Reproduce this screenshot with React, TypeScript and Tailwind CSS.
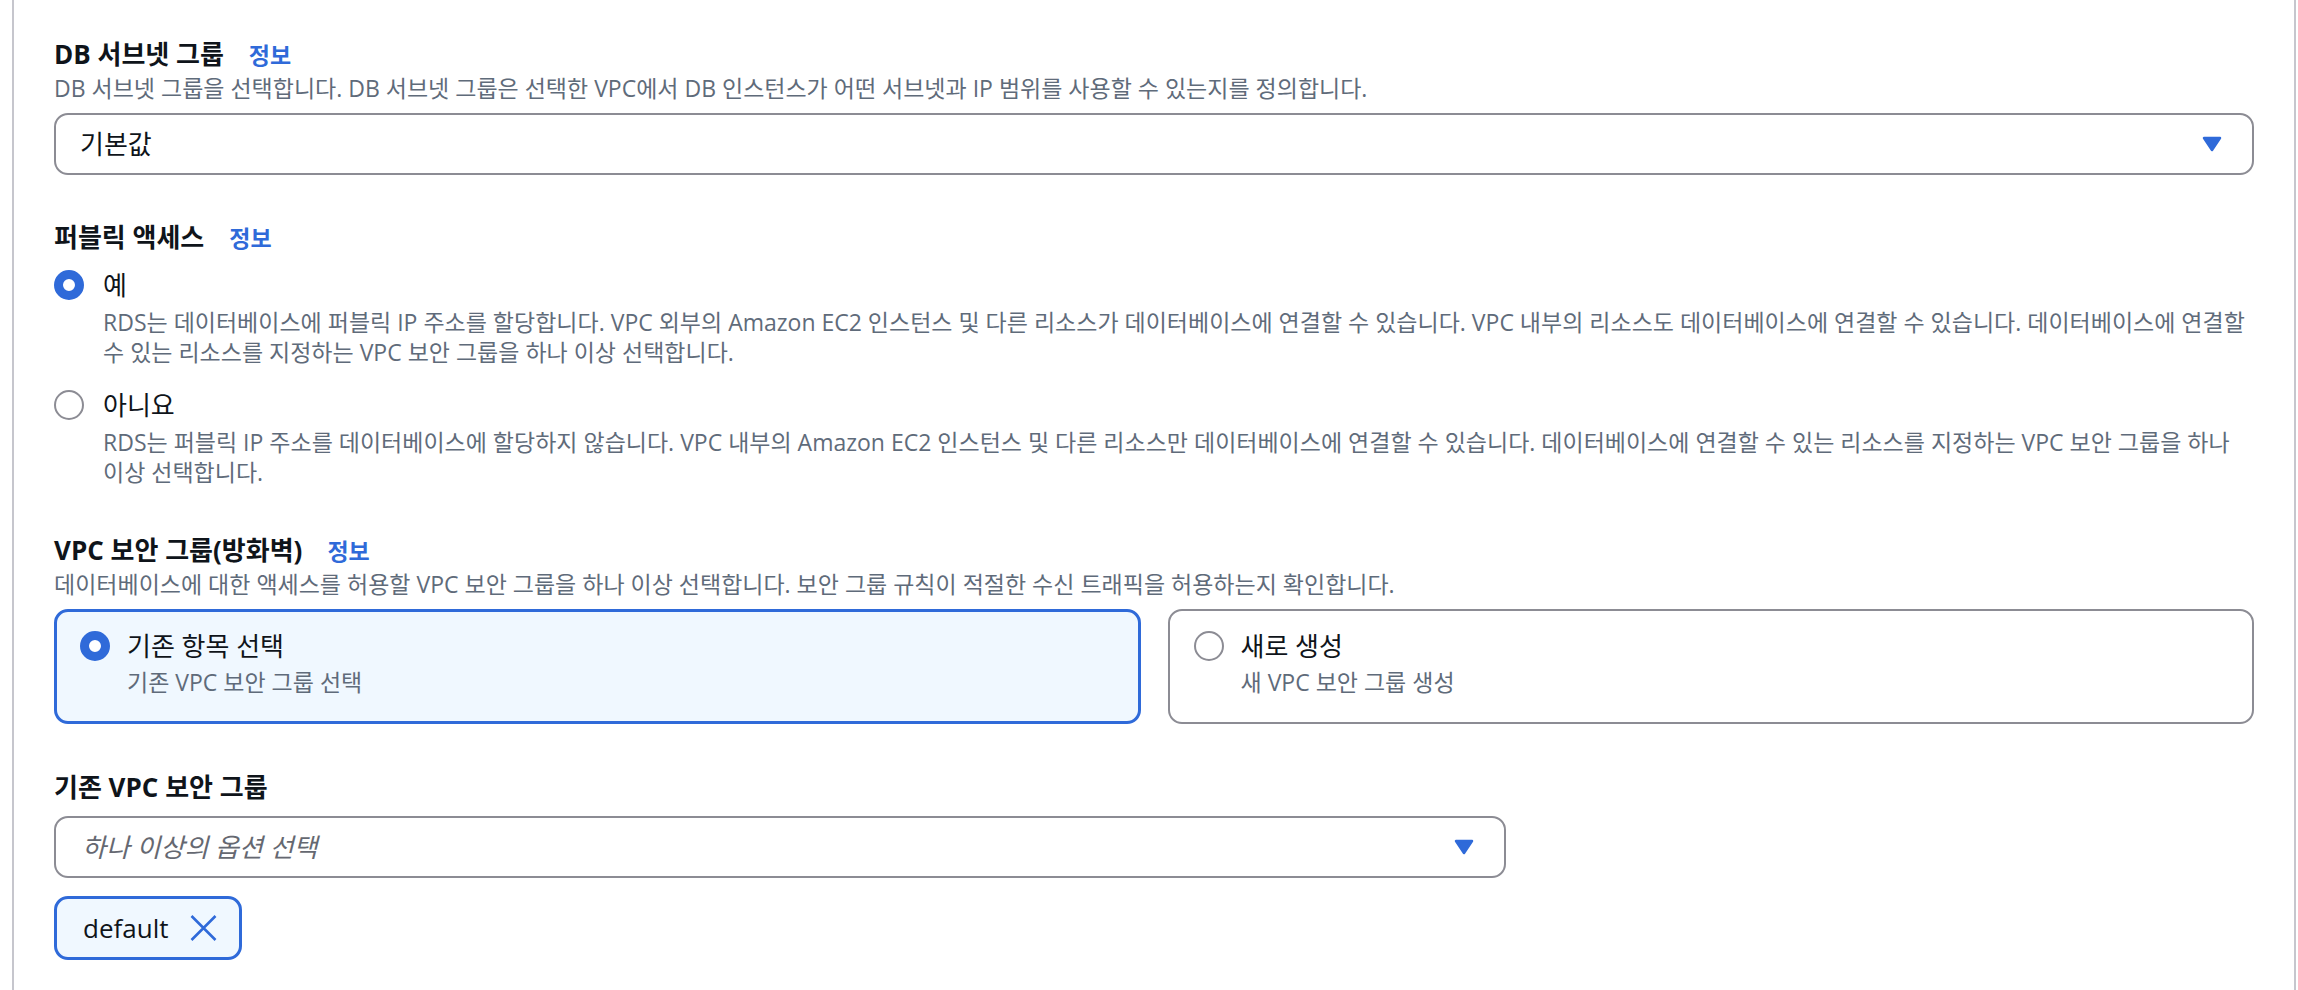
import React from "react"

const BLUE = "#2f6ad9"

function Triangle() {
  return (
    <svg width="20" height="16" viewBox="0 0 20 16">
      <polygon points="2,2 18,2 10,14" fill={BLUE} stroke={BLUE} strokeWidth="2.5" strokeLinejoin="round" />
    </svg>
  )
}

function Radio({ checked }: { checked: boolean }) {
  return checked ? (
    <div className="w-[30px] h-[30px] rounded-full border-[9px] border-[#2f6ad9] bg-white shrink-0" />
  ) : (
    <div className="w-[30px] h-[30px] rounded-full border-2 border-[#8c8c94] bg-white shrink-0" />
  )
}

function FieldLabel({ text, info = true }: { text: string; info?: boolean }) {
  return (
    <div className="flex items-baseline gap-[25px]">
      <span className="text-[26px] font-bold leading-[34px] text-[#0f141a]">{text}</span>
      {info && <a className="text-[23px] font-bold leading-[34px] text-[#2f6ad9]">정보</a>}
    </div>
  )
}

function RadioOption({
  checked,
  label,
  children,
}: {
  checked: boolean
  label: string
  children: React.ReactNode
}) {
  return (
    <div className="flex gap-[19px]">
      <div className="h-[34px] flex items-center">
        <Radio checked={checked} />
      </div>
      <div>
        <div className="text-[26px] leading-[34px] text-[#0f141a]">{label}</div>
        <div className="mt-[5px] text-[23px] leading-[30px] text-[#5f6b7a] break-keep">{children}</div>
      </div>
    </div>
  )
}

export default function App() {
  return (
    <div className="min-h-screen bg-white" style={{ fontFamily: '"Open Sans", "Noto Sans CJK KR", sans-serif' }}>
      <div className="ml-[12px] mr-[2px] min-h-screen border-x-2 border-[#c6c6cd] px-[40px] pt-[37px] pb-[40px]">
        {/* DB subnet group */}
        <div>
          <FieldLabel text="DB 서브넷 그룹" />
          <div className="mt-[1px] text-[23px] leading-[30px] text-[#5f6b7a] break-keep">
            DB 서브넷 그룹을 선택합니다. DB 서브넷 그룹은 선택한 VPC에서 DB 인스턴스가 어떤 서브넷과 IP 범위를 사용할 수 있는지를 정의합니다.
          </div>
          <div className="mt-[10px] h-[62px] rounded-[14px] border-2 border-[#8c8c94] flex items-center justify-between pl-[24px] pr-[30px]">
            <span className="text-[26px] text-[#0f141a]">기본값</span>
            <Triangle />
          </div>
        </div>

        {/* Public access */}
        <div className="mt-[45px]">
          <FieldLabel text="퍼블릭 액세스" />
          <div className="mt-[13px]">
            <RadioOption checked label="예">
              RDS는 데이터베이스에 퍼블릭 IP 주소를 할당합니다. VPC 외부의 Amazon EC2 인스턴스 및 다른 리소스가 데이터베이스에 연결할 수 있습니다. VPC 내부의 리소스도 데이터베이스에 연결할 수 있습니다. 데이터베이스에 연결할 수 있는 리소스를 지정하는 VPC 보안 그룹을 하나 이상 선택합니다.
            </RadioOption>
          </div>
          <div className="mt-[21px]">
            <RadioOption checked={false} label="아니요">
              RDS는 퍼블릭 IP 주소를 데이터베이스에 할당하지 않습니다. VPC 내부의 Amazon EC2 인스턴스 및 다른 리소스만 데이터베이스에 연결할 수 있습니다. 데이터베이스에 연결할 수 있는 리소스를 지정하는 VPC 보안 그룹을 하나 이상 선택합니다.
            </RadioOption>
          </div>
        </div>

        {/* VPC security group */}
        <div className="mt-[46px]">
          <FieldLabel text="VPC 보안 그룹(방화벽)" />
          <div className="mt-[1px] text-[23px] leading-[30px] text-[#5f6b7a] break-keep">
            데이터베이스에 대한 액세스를 허용할 VPC 보안 그룹을 하나 이상 선택합니다. 보안 그룹 규칙이 적절한 수신 트래픽을 허용하는지 확인합니다.
          </div>
          <div className="mt-[10px] grid grid-cols-2 gap-[27px]">
            <div className="rounded-[14px] border-[3px] border-[#2f6ad9] bg-[#f0f8ff] px-[23px] pt-[17px] pb-[24px] flex gap-[17px]">
              <div className="h-[34px] flex items-center">
                <Radio checked />
              </div>
              <div>
                <div className="text-[26px] leading-[34px] text-[#0f141a]">기존 항목 선택</div>
                <div className="mt-[4px] text-[23px] leading-[30px] text-[#5f6b7a]">기존 VPC 보안 그룹 선택</div>
              </div>
            </div>
            <div className="rounded-[14px] border-2 border-[#8c8c94] bg-white px-[24px] pt-[18px] pb-[25px] flex gap-[17px]">
              <div className="h-[34px] flex items-center">
                <Radio checked={false} />
              </div>
              <div>
                <div className="text-[26px] leading-[34px] text-[#0f141a]">새로 생성</div>
                <div className="mt-[4px] text-[23px] leading-[30px] text-[#5f6b7a]">새 VPC 보안 그룹 생성</div>
              </div>
            </div>
          </div>
        </div>

        {/* Existing VPC security groups */}
        <div className="mt-[46px]">
          <FieldLabel text="기존 VPC 보안 그룹" info={false} />
          <div className="mt-[12px] w-[1452px] h-[62px] rounded-[14px] border-2 border-[#8c8c94] flex items-center justify-between pl-[26px] pr-[30px]">
            <span className="text-[26px] italic text-[#656871]">하나 이상의 옵션 선택</span>
            <Triangle />
          </div>
          <div className="mt-[18px] inline-flex items-center h-[64px] w-[188px] rounded-[14px] border-[3px] border-[#2f6ad9] bg-[#f0f8ff] pl-[26px]">
            <span className="text-[26px] text-[#0f141a]">default</span>
            <svg className="ml-[22px]" width="27" height="26" viewBox="0 0 27 26">
              <path d="M1.5 1 L25.5 25 M25.5 1 L1.5 25" stroke={BLUE} strokeWidth="2.6" fill="none" />
            </svg>
          </div>
        </div>
      </div>
    </div>
  )
}
